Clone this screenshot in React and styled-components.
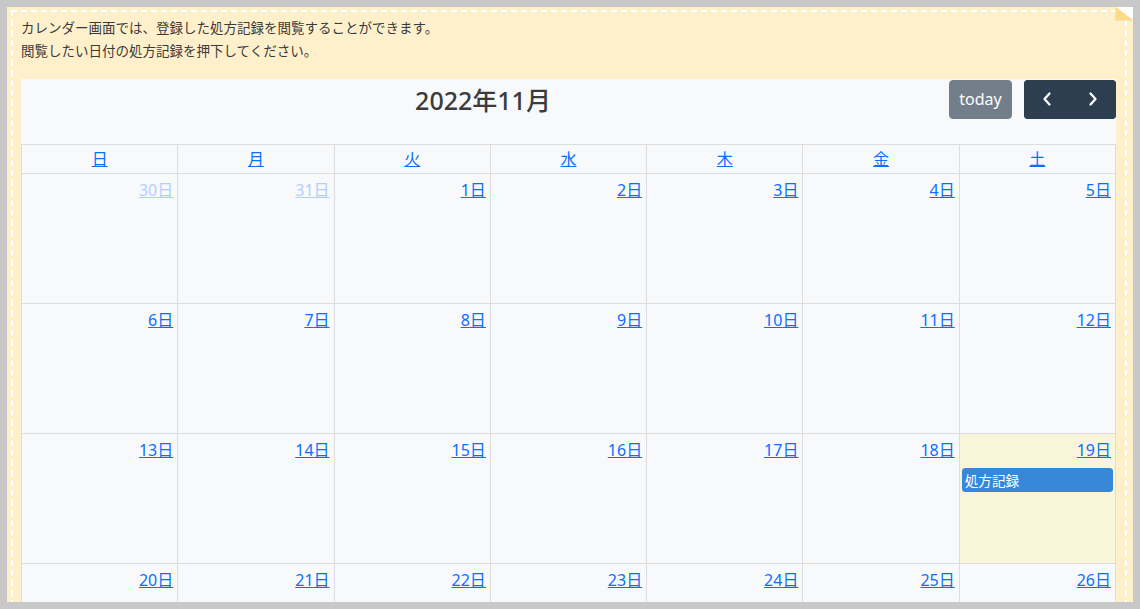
import React from 'react';
import styled, {createGlobalStyle} from 'styled-components';

const GlobalStyle = createGlobalStyle`
  html, body {
    margin: 0;
    padding: 0;
    background: #c8c8c8;
  }
  * {
    box-sizing: border-box;
  }
`;

const Frame = styled.div`
  height: 609px;
  padding: 7px;
  font-family: "Noto Sans", "Noto Sans CJK JP", sans-serif;
`;

const Clip = styled.div`
  position: relative;
  height: 100%;
  overflow: hidden;
  background: #fff0cc;
`;

const Fold = styled.div`
  position: absolute;
  top: 0;
  right: 0;
  width: 0;
  height: 0;
  border-style: solid;
  border-width: 0 17px 13px 0;
  border-color: #fff #fff #ffda85 #ffda85;
  box-shadow: -1px 1px 1px rgba(0, 0, 0, 0.06);
`;

const Note = styled.div`
  padding: 3px 6px 0 4px;
`;

const Dashed = styled.div`
  border: 2px dashed #fff;
  padding: 4px 9px 0 8px;
`;

const Intro = styled.p`
  margin: 0 0 17px;
  font-family: "Noto Sans CJK JP", sans-serif;
  font-size: 13.5px;
  line-height: 23px;
  color: #3a3a3a;
`;

const Calendar = styled.div`
  background: #f8f9fb;
  color: #333;
`;

const Toolbar = styled.div`
  display: flex;
  justify-content: space-between;
  align-items: center;
  height: 40px;
  margin-bottom: 25px;
`;

const Chunk = styled.div`
  display: flex;
  align-items: center;
  gap: 12px;
`;

const Title = styled.h2`
  margin: 0 0 0 -4px;
  font-size: 25px;
  font-weight: 500;
  color: #3b3b3b;
`;

const Button = styled.button`
  display: flex;
  align-items: center;
  justify-content: center;
  height: 39px;
  padding: 0 ${p => p.pad || 10}px;
  width: ${p => p.width ? `${p.width}px` : 'auto'};
  border: 1px solid #2c3e50;
  background: #2c3e50;
  color: #fff;
  font-family: inherit;
  font-size: 16px;
  line-height: 1.5;
  border-radius: ${p => p.radius || '4px'};
  opacity: ${p => p.disabled ? 0.65 : 1};
`;

const Group = styled.div`
  display: flex;
  border-radius: 4px;
  background: #2c3e50;
`;

const Grid = styled.div`
  display: grid;
  grid-template-columns: repeat(7, 1fr);
  border-top: 1px solid #ddd;
  border-left: 1px solid #ddd;
`;

const HeadCell = styled.div`
  border-right: 1px solid #ddd;
  border-bottom: 1px solid #ddd;
  padding: 2px 4px;
  text-align: center;
  line-height: 24px;
  font-size: 16px;
`;

const Link = styled.a`
  color: #0d6efd;
  text-decoration: underline;
  cursor: pointer;
`;

const DayCell = styled.div`
  height: 130px;
  border-right: 1px solid #ddd;
  border-bottom: 1px solid #ddd;
  background: ${p => p.today ? '#f9f5db' : 'transparent'};
`;

const DayTop = styled.div`
  display: flex;
  justify-content: flex-end;
  padding: 4px;
  line-height: 24px;
  font-size: 16px;
  opacity: ${p => p.other ? 0.3 : 1};
`;

const Event = styled.div`
  margin: 2px 2px 0;
  padding: 1px 2px;
  background: #3788d8;
  border: 1px solid #3788d8;
  border-radius: 3px;
  color: #fff;
  font-size: 13.6px;
  line-height: 20px;
  font-family: "Noto Sans CJK JP", sans-serif;
`;

const Chevron = ({dir}) => (
  <svg width="12" height="16" viewBox="0 0 12 16">
    <polyline
      points={dir === 'left' ? '8.5,2.5 3.5,8 8.5,13.5' : '3.5,2.5 8.5,8 3.5,13.5'}
      fill="none"
      stroke="#fff"
      strokeWidth="2.3"
      strokeLinecap="round"
      strokeLinejoin="round"
    />
  </svg>
);

const weekdays = ['日', '月', '火', '水', '木', '金', '土'];

// only the four weeks that fit on screen
const days = [
  [30, true], [31, true], [1], [2], [3], [4], [5],
  [6], [7], [8], [9], [10], [11], [12],
  [13], [14], [15], [16], [17], [18], [19],
  [20], [21], [22], [23], [24], [25], [26],
];

const events = {19: ['処方記録']};

export default function App() {
  return (
    <>
      <GlobalStyle />
      <Frame>
        <Clip>
          <Note>
            <Dashed>
              <Intro>
                カレンダー画面では、登録した処方記録を閲覧することができます。<br />
                閲覧したい日付の処方記録を押下してください。
              </Intro>
              <Calendar>
                <Toolbar>
                  <Chunk />
                  <Title>2022年11月</Title>
                  <Chunk>
                    <Button disabled width={63}>today</Button>
                    <Group>
                      <Button width={46} radius="4px 0 0 4px"><Chevron dir="left" /></Button>
                      <Button width={46} radius="0 4px 4px 0"><Chevron dir="right" /></Button>
                    </Group>
                  </Chunk>
                </Toolbar>
                <Grid>
                  {weekdays.map(w => (
                    <HeadCell key={w}><Link>{w}</Link></HeadCell>
                  ))}
                  {days.map(([d, other], idx) => {
                    const isToday = !other && d === 19;
                    const list = !other ? events[d] || [] : [];
                    return (
                      <DayCell key={idx} today={isToday}>
                        <DayTop other={other}>
                          <Link>{d}日</Link>
                        </DayTop>
                        {list.map(e => <Event key={e}>{e}</Event>)}
                      </DayCell>
                    );
                  })}
                </Grid>
              </Calendar>
            </Dashed>
          </Note>
          <Fold />
        </Clip>
      </Frame>
    </>
  );
}
